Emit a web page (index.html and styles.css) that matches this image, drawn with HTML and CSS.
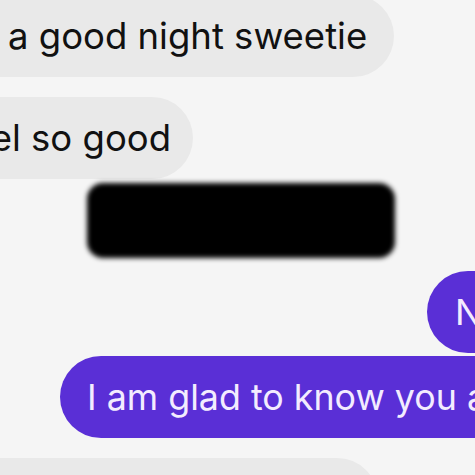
FILE: index.html
```html
<!DOCTYPE html>
<html lang="en">
<head>
<meta charset="utf-8">
<link rel="stylesheet" href="styles.css">
</head>
<body>
<main class="thread">
  <div class="row in first">
    <div class="bubble gray b1">a good night sweetie</div>
  </div>
  <div class="row in">
    <div class="bubble gray b2">feel so good</div>
  </div>
  <div class="row redact-row">
    <div class="redaction"></div>
  </div>
  <div class="row out n-row">
    <div class="bubble purple">No</div>
  </div>
  <div class="row out glad-row">
    <div class="bubble purple">I am glad to know you are</div>
  </div>
  <div class="row in last">
    <div class="bubble gray b3">&nbsp;</div>
  </div>
</main>
</body>
</html>
```

FILE: styles.css
```css
html, body {
  margin: 0;
  padding: 0;
}
body {
  width: 475px;
  height: 475px;
  overflow: hidden;
  background: #f5f5f5;
  font-family: "Inter", "Noto Sans", sans-serif;
}
.thread {
  display: flex;
  flex-direction: column;
  margin-top: -5px;
}
.row {
  display: flex;
  white-space: nowrap;
}
.bubble {
  font-size: 36.5px;
  line-height: 43px;
  padding: 20px 27px 19px 27px;
  border-radius: 42px;
  flex: none;
}
.gray {
  background: #e9e9e9;
  color: #111;
}
.purple {
  background: #5a2fd6;
  color: #f3ecff;
  font-size: 35.8px;
}
.b1 {
  margin-left: -40px;
  padding-left: 48px;
}
.b2 {
  margin-left: -70px;
  padding-right: 22px;
  margin-top: 20px;
}
.redact-row {
  padding-left: 87px;
  margin-top: 4px;
}
.redaction {
  width: 308px;
  height: 75px;
  background: #000;
  border-radius: 16px;
  filter: blur(2.5px);
}
.n-row {
  padding-left: 427px;
  margin-top: 13px;
}
.n-row .bubble {
  padding-left: 28px;
}
.glad-row {
  padding-left: 60px;
  margin-top: 3px;
}
.glad-row .bubble {
  padding-left: 27px;
}
.b3 {
  margin-top: 20px;
  margin-left: -40px;
  width: 364px;
}
```
